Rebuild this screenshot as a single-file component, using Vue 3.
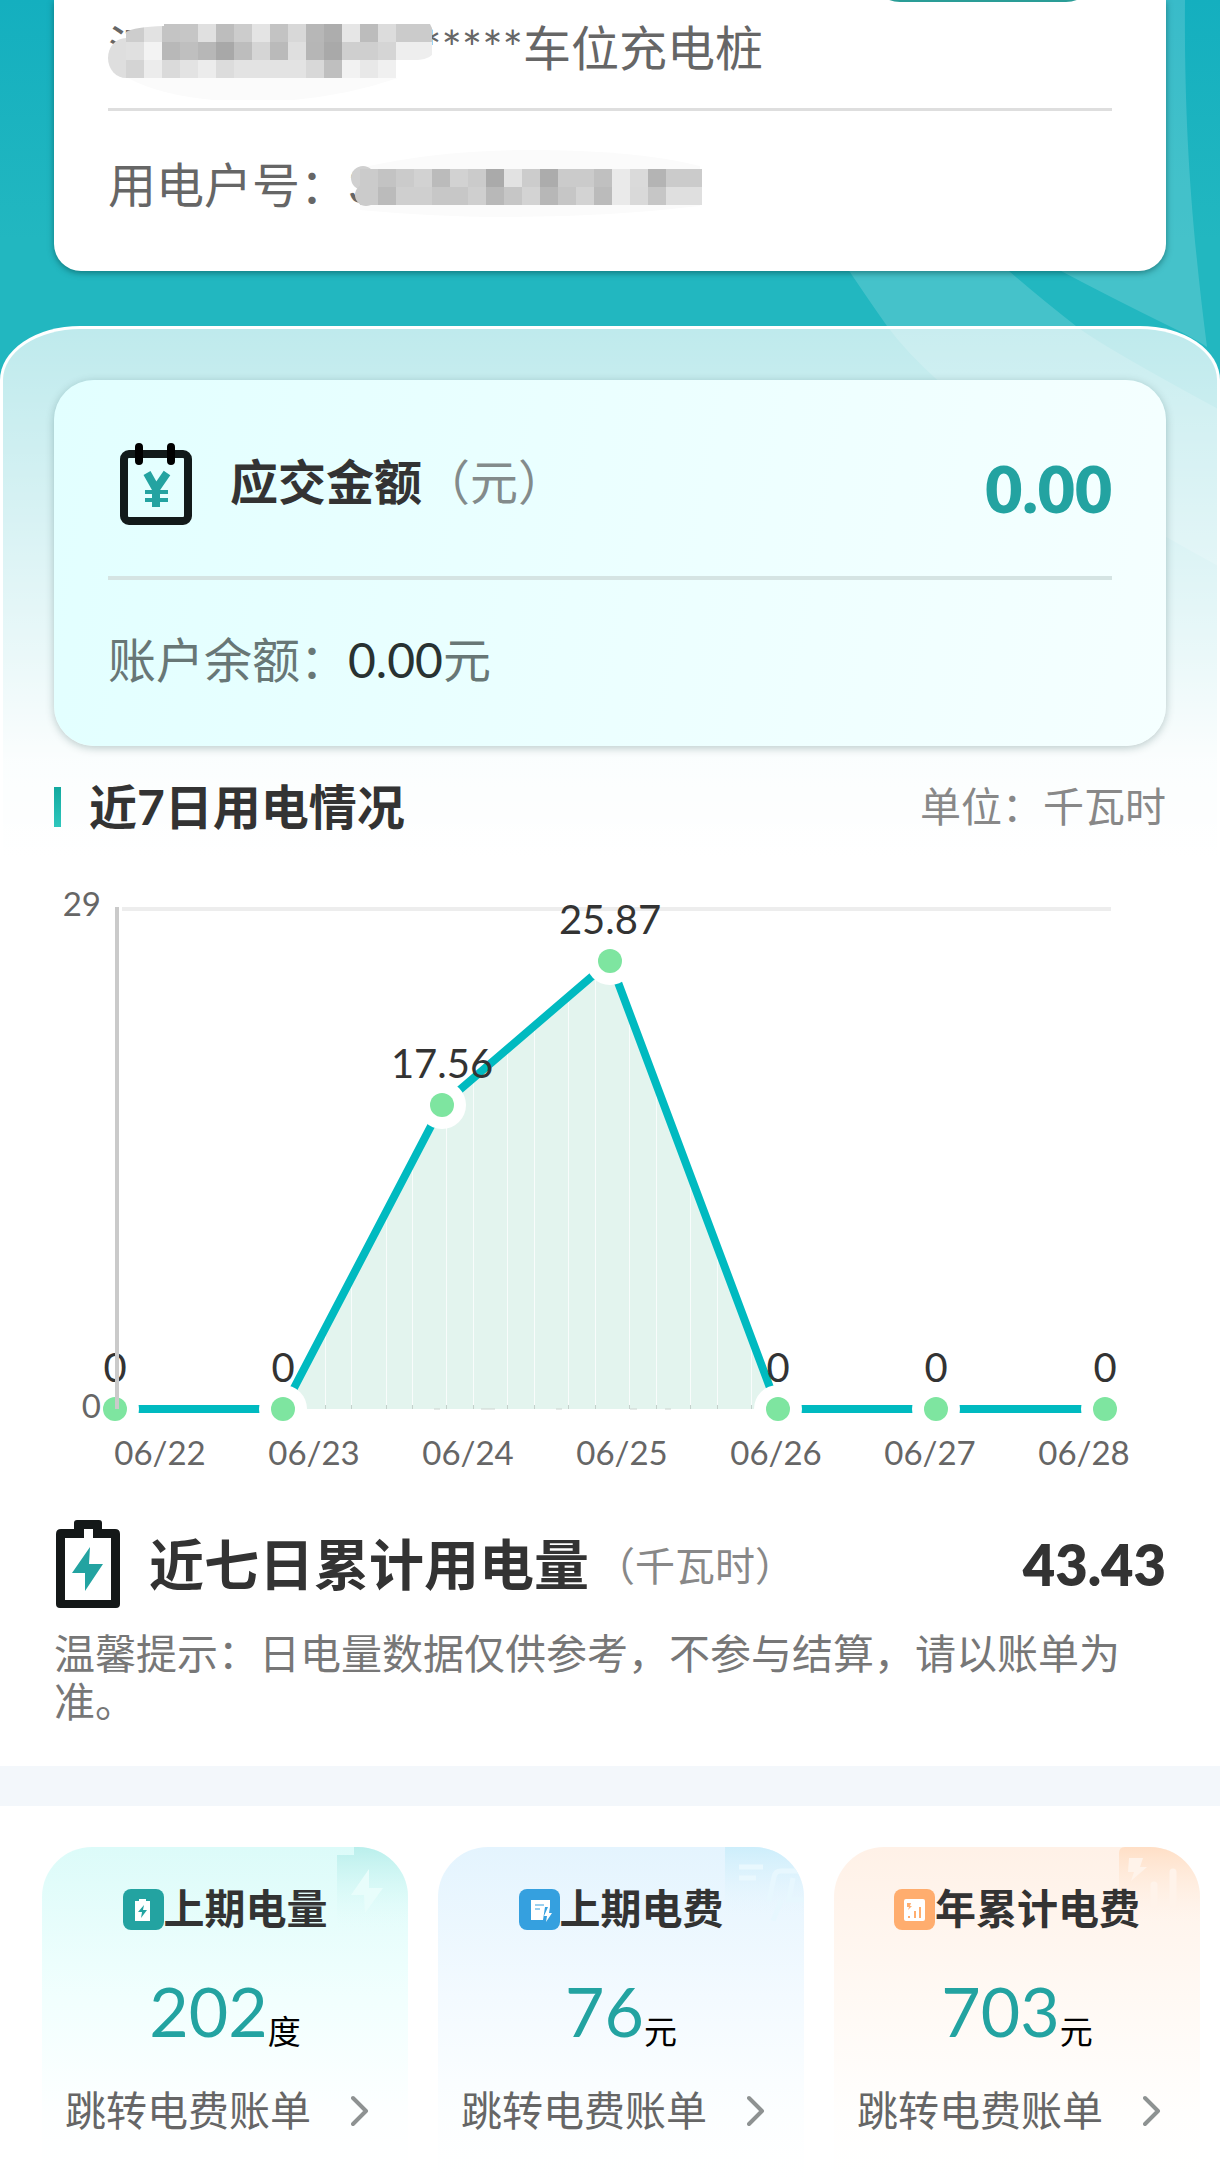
<script setup>
const cell = 18
const addressMosaic = [
  ['cd', 'e2', 'c4', 'c6', 'e0', 'bd', 'cc', 'e4', 'c3', 'd8', 'b7', 'ad', 'e6', 'bc', 'dc', 'cb', 'cb'],
  ['e0', 'f3', 'b8', 'bf', 'b7', 'a8', 'bd', 'd5', 'ba', 'df', 'b6', 'a9', 'cf', 'cf', 'd5', 'ee', 'ee'],
  ['d4', 'ec', 'da', 'e3', 'ec', 'dc', 'e3', 'e3', 'e3', 'e3', 'd8', 'bf', 'f2', 'e8', 'f0'],
]
const numberMosaic = [
  ['cb', 'c3', 'cb', 'd2', 'bb', 'd2', 'cb', 'aa', 'e2', 'cc', 'ac', 'cb', 'cb', 'c0', 'ea', 'da', 'b4', 'cb', 'cb'],
  ['cb', 'bb', 'cf', 'cf', 'c7', 'c7', 'cf', 'b8', 'c6', 'd3', 'b7', 'c6', 'd3', 'bb', 'ea', 'd9', 'c6', 'df', 'df'],
]
const grey = (v) => `#${v}${v}${v}`

const baseY = 549
const points = [
  { x: 115, y: 549, value: '0' },
  { x: 283, y: 549, value: '0' },
  { x: 442, y: 245, value: '17.56' },
  { x: 610, y: 101, value: '25.87' },
  { x: 778, y: 549, value: '0' },
  { x: 936, y: 549, value: '0' },
  { x: 1105, y: 549, value: '0' },
]
const line = points.map((p) => `${p.x},${p.y}`).join(' ')
const dates = ['06/22', '06/23', '06/24', '06/25', '06/26', '06/27', '06/28']
const stripes = [325, 351, 386, 412, 446, 473, 507, 534, 568, 595, 629, 656, 690, 717, 751]

const bills = [
  { kind: 'energy', title: '上期电量', value: '202', unit: '度' },
  { kind: 'fee', title: '上期电费', value: '76', unit: '元' },
  { kind: 'year', title: '年累计电费', value: '703', unit: '元' },
]
</script>

<template>
  <div class="page">
    <svg class="hero-art" viewBox="0 0 1220 880" preserveAspectRatio="xMaxYMin slice" aria-hidden="true">
      <path d="M790 180 Q848 271 887 326 Q960 425 1220 567 V410 Q1100 345 1076 326 Q1040 298 1009 271 L930 180 Z" />
      <path d="M1185 0 C1184 130 1192 230 1207 347 Q1190 336 1169 326 Q1110 297 1061 271 L1000 200 L1100 0 Z" />
    </svg>

    <section class="account">
      <button class="switch" type="button" aria-label="切换"></button>
      <div class="account-row address">
        <span class="masked">
          江
          <svg class="mosaic" width="332" height="90" viewBox="0 0 332 90" aria-hidden="true">
            <defs>
              <clipPath id="smudge"><path d="M18 22Q26 17 56 16V14H322Q328 24 326 42Q322 50 306 50V68H18Z" /></clipPath>
            </defs>
            <path d="M20 68H290Q220 92 140 92Q60 90 20 68Z" fill="#fbfbfb" />
            <ellipse cx="18" cy="48" rx="18" ry="20" fill="#dedede" />
            <g clip-path="url(#smudge)" shape-rendering="crispEdges">
              <g v-for="(row, r) in addressMosaic" :key="r">
                <rect
                  v-for="(c, i) in row" :key="i"
                  :x="18 + i * cell" :y="14 + r * cell" :width="cell" :height="cell" :fill="grey(c)"
                />
              </g>
            </g>
          </svg>
        </span>
        <span>*****车位充电桩</span>
      </div>
      <div class="account-row number">
        <span>用电户号：</span>
        <span class="masked masked-number">
          3
          <svg class="mosaic" width="392" height="90" viewBox="0 0 392 90" aria-hidden="true">
            <path d="M12 21Q90 3 180 3Q290 3 352 19V59Q180 79 12 63Z" fill="#fbfbfb" />
            <circle cx="15" cy="31" r="12" fill="#d0d0d0" />
            <circle cx="18" cy="48" r="11" fill="#cbcbcb" />
            <g shape-rendering="crispEdges">
              <g v-for="(row, r) in numberMosaic" :key="r">
                <rect
                  v-for="(c, i) in row" :key="i"
                  :x="12 + i * cell" :y="22 + r * cell" :width="cell" :height="cell" :fill="grey(c)"
                />
              </g>
            </g>
          </svg>
        </span>
      </div>
    </section>

    <main class="panel">
      <section class="due">
        <div class="due-row">
          <svg class="due-icon" width="72" height="84" viewBox="0 0 72 84" aria-hidden="true">
            <rect x="4" y="12" width="64" height="67" rx="5" fill="none" stroke="#121a1a" stroke-width="8" />
            <path d="M19 5V19M51 5V19" stroke="#000" stroke-width="8" stroke-linecap="round" />
            <path d="M27 31 L36 47 L47 31" fill="none" stroke="#23a3a1" stroke-width="8" />
            <path d="M25 50H48M25 58H48" stroke="#23a3a1" stroke-width="4" />
            <path d="M36 44V65" stroke="#23a3a1" stroke-width="8" />
          </svg>
          <h2>应交金额<small>（元）</small></h2>
          <strong>0.00</strong>
        </div>
        <p class="balance">账户余额：<b>0.00</b>元</p>
      </section>

      <header class="section-head">
        <h2>近7日用电情况</h2>
        <span>单位：千瓦时</span>
      </header>

      <svg class="chart" viewBox="0 0 1220 640" role="img" aria-label="近7日用电情况">
        <rect x="122" y="47" width="989" height="4" fill="#ededed" />
        <polygon :points="`283,${baseY} 442,245 610,101 778,${baseY}`" fill="#e3f4ee" />
        <g v-for="x in stripes" :key="x">
          <rect :x="x" y="80" width="1" height="466" fill="#fff" fill-opacity=".75" />
          <rect :x="x" y="545" width="1" height="4" fill="#c4d0cb" />
        </g>
        <path d="M434 549H440M481 549H495M556 549H562M630 549H637M665 549H671" stroke="#ccd5d1" stroke-width="1" />
        <polyline :points="line" fill="none" stroke="#00bac0" stroke-width="8" />
        <g v-for="p in points" :key="p.x">
          <circle :cx="p.x" :cy="p.y" r="24" fill="#fff" />
          <circle :cx="p.x" :cy="p.y" r="12" fill="#7ee5a0" />
          <text class="value" :x="p.x" :y="p.y - 27">{{ p.value }}</text>
        </g>
        <rect x="115" y="47" width="4" height="502" fill="#cacaca" />
        <text class="axis axis-y" x="101" y="56">29</text>
        <text class="axis axis-y" x="101" y="558">0</text>
        <text v-for="(d, i) in dates" :key="d" class="axis axis-x" :x="160 + i * 154" y="605">{{ d }}</text>
      </svg>

      <section class="total">
        <svg width="64" height="88" viewBox="0 0 64 88" aria-hidden="true">
          <path
            fill="#141818" fill-rule="evenodd"
            d="M18 9V3Q18 0 21 0H43Q46 0 46 3V9H59Q64 9 64 14V84Q64 88 60 88H4Q0 88 0 84V14Q0 9 5 9ZM9 18V80H55V18H37V9H28V18Z"
          />
          <path d="M34 27 L16 53 H29 L29 71 L47 44 H33 Z" fill="#23a3a1" />
        </svg>
        <h2>近七日累计用电量</h2>
        <span>（千瓦时）</span>
        <strong>43.43</strong>
      </section>
      <p class="tip">温馨提示：日电量数据仅供参考，不参与结算，请以账单为准。</p>
    </main>

    <section class="bills">
      <article v-for="b in bills" :key="b.kind" class="bill" :class="b.kind">
        <svg v-if="b.kind === 'energy'" class="corner" width="71" height="84" viewBox="0 0 71 84" aria-hidden="true">
          <defs>
            <linearGradient id="fadeEnergy" x2="0" y2="1"><stop stop-color="#baefec" /><stop offset="1" stop-color="#e6fdfb" stop-opacity="0" /></linearGradient>
          </defs>
          <path d="M0 8H17V0H71V84H0Z" fill="url(#fadeEnergy)" />
          <path d="M32 22 L14 48 H27 L28 66 L46 41 H32 Z" fill="#e8fdfb" />
        </svg>
        <svg v-else-if="b.kind === 'fee'" class="corner" width="79" height="74" viewBox="0 0 79 74" aria-hidden="true">
          <defs>
            <linearGradient id="fadeFee" x2="0" y2="1"><stop stop-color="#cdeefb" /><stop offset="1" stop-color="#ecf7fe" stop-opacity="0" /></linearGradient>
          </defs>
          <path d="M0 0H79V74H0Z" fill="url(#fadeFee)" />
          <path d="M14 20H38M14 31H31" stroke="#e9f8fe" stroke-width="5" />
          <path d="M79 24H56Q50 24 49 30L44 54M79 53H64L68 31M56 53L48 74" fill="none" stroke="#e7f7fe" stroke-width="5" />
        </svg>
        <svg v-else class="corner" width="81" height="76" viewBox="0 0 81 76" aria-hidden="true">
          <defs>
            <linearGradient id="fadeYear" x2="0" y2="1"><stop stop-color="#ffdfc6" /><stop offset="1" stop-color="#fff2e8" stop-opacity="0" /></linearGradient>
          </defs>
          <path d="M6 0H81V76H0V6Q0 0 6 0Z" fill="url(#fadeYear)" />
          <path d="M10 11H24L21 20H28L12 34L15 25H9Z" fill="#fff3ea" />
          <path d="M35 38V57M54 25V57M15 49V57" stroke="#fff3ea" stroke-width="7" stroke-linecap="round" />
        </svg>

        <h3>
          <svg v-if="b.kind === 'energy'" width="41" height="41" viewBox="0 0 41 41" aria-hidden="true">
            <rect width="41" height="41" rx="8" fill="#23a3a1" />
            <path d="M16 12V10H23V12H27V32H12V12Z" fill="#fff" />
            <path d="M21 16L15 23H19L18 29L24 21H20Z" fill="#23a3a1" />
          </svg>
          <svg v-else-if="b.kind === 'fee'" width="41" height="41" viewBox="0 0 41 41" aria-hidden="true">
            <rect width="41" height="41" rx="8" fill="#35a0df" />
            <path d="M12 11H31V18H26L24 31H12Z" fill="#fff" />
            <path d="M16 16H25M16 20H21" stroke="#35a0df" stroke-width="1" />
            <path d="M29 18L25 27H28L27 33L33 24H30L31 18Z" fill="#fff" />
          </svg>
          <svg v-else width="41" height="41" viewBox="0 0 41 41" aria-hidden="true">
            <rect width="41" height="41" rx="8" fill="#ffad6e" />
            <rect x="10" y="10" width="21" height="22" rx="2" fill="#fff" />
            <path d="M21 29V22M26 29V18M15 29V27" stroke="#ffad6e" stroke-width="2" />
            <path d="M13 14H17L16 17H18L14 21L15 18H13Z" fill="#ffad6e" />
          </svg>
          {{ b.title }}
        </h3>
        <p class="amount"><b>{{ b.value }}</b><span>{{ b.unit }}</span></p>
        <a class="link" href="#bill">
          跳转电费账单
          <svg width="34" height="32" viewBox="0 0 34 32" aria-hidden="true">
            <path d="M2 3 L15 16 L2 29" fill="none" stroke="#8e9292" stroke-width="4" stroke-linecap="round" stroke-linejoin="round" />
          </svg>
        </a>
      </article>
    </section>
  </div>
</template>

<style>
body {
  margin: 0;
  background: #fff;
}
</style>

<style scoped>
.page {
  position: relative;
  overflow: hidden;
  min-height: 100vh;
  font-family: Lato, "Noto Sans CJK SC", sans-serif;
  color: #333;
  background: linear-gradient(#14afbf 0, #22b7c0 240px, #22b7c0 860px, #fff 860px);
}
h2, h3, p { margin: 0; }

.hero-art {
  position: absolute;
  top: 0;
  left: 0;
  width: 100%;
  height: 880px;
  fill: #fff;
  fill-opacity: .16;
}

.account {
  position: relative;
  margin: 0 54px;
  padding: 0 54px;
  border-radius: 0 0 27px 27px;
  background: #fff;
  box-shadow: 0 2px 6px rgba(0, 60, 60, .5);
  font-size: 48px;
  line-height: 60px;
  color: #666;
}
.switch {
  position: absolute;
  top: -58px;
  right: 70px;
  width: 226px;
  height: 60px;
  border: 0;
  border-radius: 30px;
  background: #2a9d97;
}
.account-row {
  display: flex;
  align-items: center;
}
.address {
  height: 96px;
  padding-bottom: 12px;
  border-bottom: 3px solid #dedede;
}
.number {
  height: 148px;
  padding-bottom: 12px;
}
.masked {
  position: relative;
  width: 313px;
}
.masked-number { width: 352px; }
.mosaic {
  position: absolute;
  top: -8px;
  left: 0;
}

.panel {
  position: relative;
  margin-top: 55px;
  padding-top: 51px;
  border: 3px solid #fff;
  border-bottom: 0;
  border-radius: 80px 80px 0 0 / 54px 54px 0 0;
  background: linear-gradient(rgba(255, 255, 255, .71) 0, rgba(255, 255, 255, .9) 320px, rgba(255, 255, 255, .98) 430px, #fff 530px);
}

.due {
  margin: 0 51px;
  padding: 0 54px;
  border-radius: 40px;
  background: linear-gradient(100deg, #e2ffff, #f5ffff);
  box-shadow: 0 2px 8px rgba(0, 50, 50, .25);
}
.due-row {
  display: flex;
  align-items: center;
  height: 196px;
  border-bottom: 4px solid #d5e4e3;
}
.due-icon { margin: 11px 38px 0 12px; }
.due-row h2 {
  flex: 1;
  padding-top: 8px;
  font-size: 48px;
  line-height: 72px;
}
.due-row small {
  font-size: 48px;
  font-weight: 400;
  color: #838b8b;
}
.due-row strong {
  padding-top: 22px;
  font-size: 64px;
  font-weight: 800;
  line-height: 72px;
  color: #23a3a1;
}
.balance {
  height: 166px;
  font-size: 48px;
  line-height: 160px;
  color: #687776;
}
.balance b {
  font-weight: 400;
  color: #283232;
}

.section-head {
  display: flex;
  align-items: center;
  justify-content: space-between;
  height: 114px;
  padding: 4px 51px 0;
}
.section-head h2 {
  display: flex;
  align-items: center;
  gap: 28px;
  font-size: 48px;
  line-height: 60px;
}
.section-head h2::before {
  content: "";
  width: 7px;
  height: 40px;
  background: linear-gradient(#12a99f, #2ec7bd);
}
.section-head span {
  font-size: 41px;
  line-height: 56px;
  color: #888;
}

.chart {
  display: block;
  width: calc(100% + 6px);
  margin: -4px -3px 0;
}
.value {
  font-size: 40px;
  text-anchor: middle;
  fill: #333;
}
.axis {
  font-size: 33px;
  fill: #666;
}
.axis-x { text-anchor: middle; }
.axis-y { text-anchor: end; }

.total {
  display: flex;
  align-items: center;
  height: 88px;
  margin-top: 20px;
  padding: 0 51px 0 53px;
}
.total h2 {
  margin-left: 29px;
  font-size: 55px;
  line-height: 80px;
}
.total span {
  flex: 1;
  margin-left: 6px;
  font-size: 40px;
  color: #888;
}
.total strong {
  font-size: 56px;
  font-weight: 800;
}

.tip {
  padding: 22px 51px 40px;
  font-size: 41px;
  line-height: 48px;
  color: #777;
}

.bills {
  position: relative;
  display: grid;
  grid-template-columns: repeat(3, 1fr);
  gap: 30px;
  padding: 41px 20px 0 42px;
  border-top: 40px solid #f3f7fb;
  background: #fff;
}
.bill {
  position: relative;
  overflow: hidden;
  display: flex;
  flex-direction: column;
  align-items: center;
  height: 332px;
  border-radius: 50px 50px 0 0;
}
.energy { background: linear-gradient(#dcfbf9, #f1fffe 45%, #fdffff 80%, #fff); }
.fee { background: linear-gradient(#e4f4fe, #f3faff 45%, #fcfeff 80%, #fff); }
.year { background: linear-gradient(#fff1e7, #fff9f4 45%, #fffefd 80%, #fff); }
.corner {
  position: absolute;
  top: 0;
  right: 0;
}
.bill h3 {
  position: relative;
  display: flex;
  align-items: center;
  margin-top: 32px;
  font-size: 41px;
  line-height: 60px;
}
.amount {
  display: flex;
  align-items: flex-end;
  height: 114px;
  color: #000;
}
.amount b {
  font-size: 68px;
  font-weight: 400;
  line-height: 84px;
  color: #23a3a1;
}
.amount span {
  font-size: 33px;
  line-height: 44px;
}
.link {
  display: flex;
  align-items: center;
  gap: 40px;
  margin-top: 28px;
  font-size: 41px;
  line-height: 60px;
  color: #666;
  text-decoration: none;
}
</style>
